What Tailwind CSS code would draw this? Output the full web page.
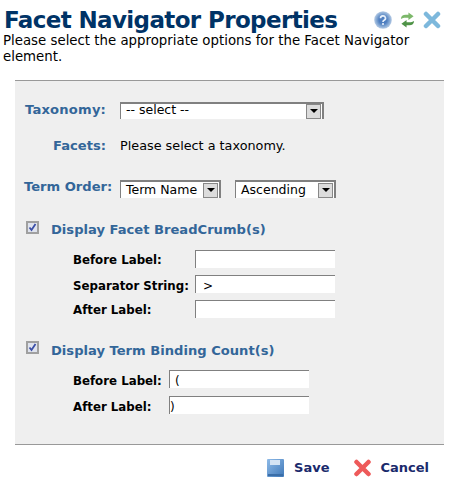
<!DOCTYPE html>
<html lang="en">
<head>
  <meta charset="UTF-8">
  <title>Facet Navigator Properties</title>
  <script src="https://cdn.jsdelivr.net/npm/@tailwindcss/browser@4"></script>
</head>
<body class="bg-white font-['DejaVu_Sans',sans-serif] text-[13px] text-black w-[454px] h-[482px] overflow-hidden">
  <div class="flex items-start justify-between pl-[4px] pr-[13px] pt-[6px] h-[33px]">
    <h1 class="text-[23px] tracking-[-0.62px] leading-[28px] font-bold text-[#003366] whitespace-nowrap">Facet Navigator Properties</h1>
    <div class="flex items-center gap-[8px] mt-[5px]">
      <svg width="18" height="18" viewBox="0 0 18 18">
        <defs><radialGradient id="help"><stop offset="0.45" stop-color="#4f7fc0"/><stop offset="0.8" stop-color="#8fb0d8"/><stop offset="1" stop-color="#b5cae4"/></radialGradient></defs>
        <circle cx="9" cy="9" r="8.8" fill="url(#help)"/>
        <path d="M6.500 7.200a2.500 2.300 0 1 1 3.600 2.100c-.8.4-1.100.8-1.100 1.600" fill="none" stroke="#e8f0fa" stroke-width="1.700"/>
        <circle cx="9" cy="13" r="1.100" fill="#e8f0fa"/>
      </svg>
      <svg width="15" height="18" viewBox="0 0 16 18"><path d="M1 8c0-3 2-4.500 5-4.500h3V1l5.500 4L9 9V6.500H6C4 6.500 2.500 7 1 8z" fill="#7cb86a"/><path d="M15 10c0 3-2 4.500-5 4.500H7V17l-5.500-4L7 9v2.500h3c2 0 3.500-.5 5-1.500z" fill="#4f9347"/></svg>
      <svg width="18" height="18" viewBox="0 0 18 18"><path d="M3 3l12 12M15 3L3 15" stroke="#7db8dc" stroke-width="4.500" stroke-linecap="round"/></svg>
    </div>
  </div>
  <p class="pl-[3px] pr-[10px] text-[13.33px] leading-[16px] h-[47px]">Please select the appropriate options for the Facet Navigator element.</p>

  <main class="mx-[15px] w-[429px] h-[365px] bg-[#efefef] border-y border-[#999999] text-[13.1px]">
    <div class="flex items-center h-[20px] mt-[19px]">
      <label class="w-[105px] pl-[10px] font-bold text-[#336699] whitespace-nowrap tracking-[0.2px]">Taxonomy:</label>
      <div class="flex items-center justify-between w-[204px] h-[17px] bg-white border-t-2 border-l border-r-2 border-[#808080] pl-[5px] pr-[1px] text-[12.5px]">
        <span class="-mt-[1px]">-- select --</span>
        <span class="flex items-center justify-center w-[15px] h-[15px] bg-[#dcdcdc] border border-[#888888]"><span class="w-0 h-0 border-x-[4px] border-t-[4px] border-x-transparent border-t-black"></span></span>
      </div>
    </div>

    <div class="flex items-center h-[20px] mt-[16px]">
      <label class="w-[91px] mr-[14px] text-right font-bold text-[#336699]">Facets:</label>
      <span class="text-[12.8px]">Please select a taxonomy.</span>
    </div>

    <div class="flex items-center h-[20px] mt-[23px]">
      <label class="w-[105px] pl-[9px] font-bold text-[#336699] whitespace-nowrap -mt-[4px]">Term Order:</label>
      <div class="flex items-center justify-between w-[101px] h-[18px] bg-white border-t-2 border-l border-r-2 border-[#808080] pl-[5px] pr-[1px] mr-[14px] text-[12.5px]">
        <span>Term Name</span>
        <span class="flex items-center justify-center w-[15px] h-[15px] bg-[#dcdcdc] border border-[#888888]"><span class="w-0 h-0 border-x-[4px] border-t-[4px] border-x-transparent border-t-black"></span></span>
      </div>
      <div class="flex items-center justify-between w-[101px] h-[18px] bg-white border-t-2 border-l border-r-2 border-[#808080] pl-[5px] pr-[1px] text-[12.5px]">
        <span>Ascending</span>
        <span class="flex items-center justify-center w-[15px] h-[15px] bg-[#dcdcdc] border border-[#888888]"><span class="w-0 h-0 border-x-[4px] border-t-[4px] border-x-transparent border-t-black"></span></span>
      </div>
    </div>

    <div class="flex items-center h-[20px] mt-[21px] pl-[11px]">
      <span class="flex items-center justify-center w-[13px] h-[13px] mr-[12px] -mt-[6px] bg-[#dfe3ee] border-2 border-[#a0a0a0]">
        <svg class="shrink-0" width="9" height="9" viewBox="0 0 9 9"><path d="M1.500 4.500l2 2.500 4-6" fill="none" stroke="#3b4fa8" stroke-width="1.800"/></svg>
      </span>
      <span class="font-bold text-[#336699]">Display Facet BreadCrumb(s)</span>
    </div>

    <div class="flex flex-col gap-[7px] mt-[10px] pl-[58px] text-[11.8px]">
      <div class="flex items-center h-[18px]">
        <label class="w-[122px] mt-[4px] font-bold whitespace-nowrap">Before Label:</label>
        <input type="text" class="w-[140px] h-[18px] bg-white border-t border-l border-[#808080] outline-none px-[7px] pt-[2px] text-[12px]">
      </div>
      <div class="flex items-center h-[18px]">
        <label class="w-[122px] mt-[5px] font-bold whitespace-nowrap">Separator String:</label>
        <input type="text" value="&gt;" class="w-[140px] h-[18px] bg-white border-t border-l border-[#808080] outline-none px-[7px] pt-[2px] text-[12px]">
      </div>
      <div class="flex items-center h-[18px]">
        <label class="w-[122px] mt-[4px] font-bold whitespace-nowrap">After Label:</label>
        <input type="text" class="w-[140px] h-[18px] bg-white border-t border-l border-[#808080] outline-none px-[7px] pt-[2px] text-[12px]">
      </div>
    </div>

    <div class="flex items-center h-[20px] mt-[23px] pl-[11px]">
      <span class="flex items-center justify-center w-[13px] h-[13px] mr-[12px] -mt-[7px] bg-[#dfe3ee] border-2 border-[#a0a0a0]">
        <svg class="shrink-0" width="9" height="9" viewBox="0 0 9 9"><path d="M1.500 4.500l2 2.500 4-6" fill="none" stroke="#3b4fa8" stroke-width="1.800"/></svg>
      </span>
      <span class="font-bold text-[#336699]">Display Term Binding Count(s)</span>
    </div>

    <div class="flex flex-col gap-[8px] mt-[9px] pl-[58px] text-[11.8px]">
      <div class="flex items-center h-[18px]">
        <label class="w-[96px] mt-[6px] font-bold whitespace-nowrap">Before Label:</label>
        <input type="text" value="(" class="w-[140px] h-[18px] bg-white border-t border-l border-[#808080] outline-none px-[5px] pt-[2px] text-[12px]">
      </div>
      <div class="flex items-center h-[18px]">
        <label class="w-[96px] mt-[6px] font-bold whitespace-nowrap">After Label:</label>
        <input type="text" value=")" class="w-[140px] h-[18px] bg-white border-t border-l border-[#808080] outline-none px-0 pt-[2px] text-[12px]">
      </div>
    </div>
  </main>

  <div class="flex items-center justify-end pr-[25px] pt-[13px] font-bold text-[#1a2a6c]">
    <svg class="mr-[10px]" width="17" height="18" viewBox="0 0 17 18">
      <defs><linearGradient id="disk" x1="0" y1="0" x2="1" y2="1"><stop offset="0" stop-color="#8fbbe8"/><stop offset="1" stop-color="#3f78b8"/></linearGradient></defs>
      <rect width="17" height="18" rx="1" fill="url(#disk)"/>
      <rect x="3" y="1" width="10" height="5" fill="#d5e4f4"/>
      <rect x="1" y="15" width="15" height="2" fill="#3a6ea8"/>
    </svg>
    <span class="mr-[24px]">Save</span>
    <svg class="mr-[8px]" width="19" height="18" viewBox="0 0 18 18"><path d="M3 3l12 12M15 3L3 15" stroke="#ee5a5a" stroke-width="4.500" stroke-linecap="round"/></svg>
    <span>Cancel</span>
  </div>
</body>
</html>
